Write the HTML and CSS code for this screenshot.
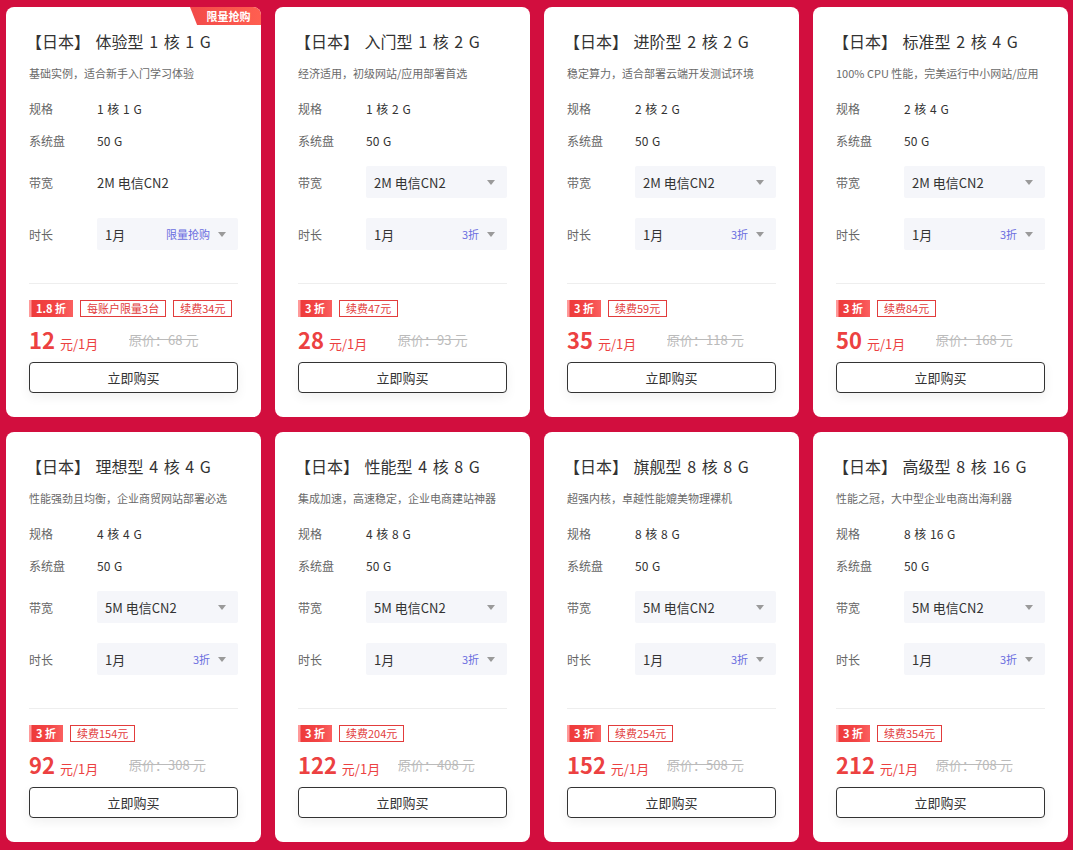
FILE: index.html
```html
<!DOCTYPE html>
<html lang="zh-CN">
<head>
  <meta charset="UTF-8">
  <meta name="viewport" content="width=device-width, initial-scale=1.0">
  <title>日本云服务器</title>
  <link rel="stylesheet" href="styles.css">
</head>
<body>
  <div class="grid">

    <div class="card">
      <div class="badge">限量抢购</div>
      <h3 class="title">【日本】 体验型 1 核 1 G</h3>
      <p class="desc">基础实例，适合新手入门学习体验</p>
      <div class="row"><span class="label">规格</span><span class="value">1 核 1 G</span></div>
      <div class="row"><span class="label">系统盘</span><span class="value">50 G</span></div>
      <div class="row row-bw"><span class="label">带宽</span><span class="value big">2M 电信CN2</span></div>
      <div class="row row-time"><span class="label">时长</span><div class="select"><span>1月</span><em>限量抢购</em><i class="arrow"></i></div></div>
      <div class="divider"></div>
      <div class="tags"><span class="tag-off">1.8 折</span><span class="tag">每账户限量3台</span><span class="tag">续费34元</span></div>
      <div class="price"><span class="now"><b>12</b> 元/1月</span><s class="old">原价：68 元</s></div>
      <button class="buy">立即购买</button>
    </div>

    <div class="card">
      <h3 class="title">【日本】 入门型 1 核 2 G</h3>
      <p class="desc">经济适用，初级网站/应用部署首选</p>
      <div class="row"><span class="label">规格</span><span class="value">1 核 2 G</span></div>
      <div class="row"><span class="label">系统盘</span><span class="value">50 G</span></div>
      <div class="row row-bw"><span class="label">带宽</span><div class="select"><span>2M 电信CN2</span><i class="arrow"></i></div></div>
      <div class="row row-time"><span class="label">时长</span><div class="select"><span>1月</span><em>3折</em><i class="arrow"></i></div></div>
      <div class="divider"></div>
      <div class="tags"><span class="tag-off">3 折</span><span class="tag">续费47元</span></div>
      <div class="price"><span class="now"><b>28</b> 元/1月</span><s class="old">原价：93 元</s></div>
      <button class="buy">立即购买</button>
    </div>

    <div class="card">
      <h3 class="title">【日本】 进阶型 2 核 2 G</h3>
      <p class="desc">稳定算力，适合部署云端开发测试环境</p>
      <div class="row"><span class="label">规格</span><span class="value">2 核 2 G</span></div>
      <div class="row"><span class="label">系统盘</span><span class="value">50 G</span></div>
      <div class="row row-bw"><span class="label">带宽</span><div class="select"><span>2M 电信CN2</span><i class="arrow"></i></div></div>
      <div class="row row-time"><span class="label">时长</span><div class="select"><span>1月</span><em>3折</em><i class="arrow"></i></div></div>
      <div class="divider"></div>
      <div class="tags"><span class="tag-off">3 折</span><span class="tag">续费59元</span></div>
      <div class="price"><span class="now"><b>35</b> 元/1月</span><s class="old">原价：118 元</s></div>
      <button class="buy">立即购买</button>
    </div>

    <div class="card">
      <h3 class="title">【日本】 标准型 2 核 4 G</h3>
      <p class="desc">100% CPU 性能，完美运行中小网站/应用</p>
      <div class="row"><span class="label">规格</span><span class="value">2 核 4 G</span></div>
      <div class="row"><span class="label">系统盘</span><span class="value">50 G</span></div>
      <div class="row row-bw"><span class="label">带宽</span><div class="select"><span>2M 电信CN2</span><i class="arrow"></i></div></div>
      <div class="row row-time"><span class="label">时长</span><div class="select"><span>1月</span><em>3折</em><i class="arrow"></i></div></div>
      <div class="divider"></div>
      <div class="tags"><span class="tag-off">3 折</span><span class="tag">续费84元</span></div>
      <div class="price"><span class="now"><b>50</b> 元/1月</span><s class="old">原价：168 元</s></div>
      <button class="buy">立即购买</button>
    </div>

    <div class="card">
      <h3 class="title">【日本】 理想型 4 核 4 G</h3>
      <p class="desc">性能强劲且均衡，企业商贸网站部署必选</p>
      <div class="row"><span class="label">规格</span><span class="value">4 核 4 G</span></div>
      <div class="row"><span class="label">系统盘</span><span class="value">50 G</span></div>
      <div class="row row-bw"><span class="label">带宽</span><div class="select"><span>5M 电信CN2</span><i class="arrow"></i></div></div>
      <div class="row row-time"><span class="label">时长</span><div class="select"><span>1月</span><em>3折</em><i class="arrow"></i></div></div>
      <div class="divider"></div>
      <div class="tags"><span class="tag-off">3 折</span><span class="tag">续费154元</span></div>
      <div class="price"><span class="now"><b>92</b> 元/1月</span><s class="old">原价：308 元</s></div>
      <button class="buy">立即购买</button>
    </div>

    <div class="card">
      <h3 class="title">【日本】 性能型 4 核 8 G</h3>
      <p class="desc">集成加速，高速稳定，企业电商建站神器</p>
      <div class="row"><span class="label">规格</span><span class="value">4 核 8 G</span></div>
      <div class="row"><span class="label">系统盘</span><span class="value">50 G</span></div>
      <div class="row row-bw"><span class="label">带宽</span><div class="select"><span>5M 电信CN2</span><i class="arrow"></i></div></div>
      <div class="row row-time"><span class="label">时长</span><div class="select"><span>1月</span><em>3折</em><i class="arrow"></i></div></div>
      <div class="divider"></div>
      <div class="tags"><span class="tag-off">3 折</span><span class="tag">续费204元</span></div>
      <div class="price"><span class="now"><b>122</b> 元/1月</span><s class="old">原价：408 元</s></div>
      <button class="buy">立即购买</button>
    </div>

    <div class="card">
      <h3 class="title">【日本】 旗舰型 8 核 8 G</h3>
      <p class="desc">超强内核，卓越性能媲美物理裸机</p>
      <div class="row"><span class="label">规格</span><span class="value">8 核 8 G</span></div>
      <div class="row"><span class="label">系统盘</span><span class="value">50 G</span></div>
      <div class="row row-bw"><span class="label">带宽</span><div class="select"><span>5M 电信CN2</span><i class="arrow"></i></div></div>
      <div class="row row-time"><span class="label">时长</span><div class="select"><span>1月</span><em>3折</em><i class="arrow"></i></div></div>
      <div class="divider"></div>
      <div class="tags"><span class="tag-off">3 折</span><span class="tag">续费254元</span></div>
      <div class="price"><span class="now"><b>152</b> 元/1月</span><s class="old">原价：508 元</s></div>
      <button class="buy">立即购买</button>
    </div>

    <div class="card">
      <h3 class="title">【日本】 高级型 8 核 16 G</h3>
      <p class="desc">性能之冠，大中型企业电商出海利器</p>
      <div class="row"><span class="label">规格</span><span class="value">8 核 16 G</span></div>
      <div class="row"><span class="label">系统盘</span><span class="value">50 G</span></div>
      <div class="row row-bw"><span class="label">带宽</span><div class="select"><span>5M 电信CN2</span><i class="arrow"></i></div></div>
      <div class="row row-time"><span class="label">时长</span><div class="select"><span>1月</span><em>3折</em><i class="arrow"></i></div></div>
      <div class="divider"></div>
      <div class="tags"><span class="tag-off">3 折</span><span class="tag">续费354元</span></div>
      <div class="price"><span class="now"><b>212</b> 元/1月</span><s class="old">原价：708 元</s></div>
      <button class="buy">立即购买</button>
    </div>

  </div>
</body>
</html>
```

FILE: styles.css
```css
body {
  margin: 0;
  background-color: #d20e3e;
  font-family: "Noto Sans CJK SC", "Noto Sans", sans-serif;
  color: #333;
}
.grid {
  display: grid;
  grid-template-columns: repeat(4, 255px);
  column-gap: 14px;
  row-gap: 15px;
  padding: 7px 0 0 6px;
}
.card {
  position: relative;
  background-color: #ffffff;
  border-radius: 8px;
  padding: 23px;
  height: 410px;
  box-sizing: border-box;
}
.badge {
  position: absolute;
  top: 0;
  right: 0;
  width: 71px;
  height: 18px;
  line-height: 18px;
  padding-left: 6px;
  box-sizing: border-box;
  text-align: center;
  font-size: 11px;
  font-weight: bold;
  color: #fff;
  background: linear-gradient(90deg, #f24a4a, #ff5f50);
  border-top-right-radius: 8px;
  clip-path: polygon(0 0, 100% 0, 100% 100%, 10% 100%);
}
.title {
  margin: 0 0 0 -3px;
  font-size: 16px;
  line-height: 22px;
  padding-bottom: 2px;
  font-weight: normal;
  word-spacing: 2px;
  color: #333;
}
.desc {
  margin: 10px 0 10px;
  font-size: 11px;
  line-height: 18px;
  color: #6a6a6a;
}
.row {
  display: flex;
  align-items: center;
  height: 32px;
  font-size: 12px;
}
.row-bw {
  margin-top: 10px;
}
.row-time {
  margin-top: 20px;
}
.label {
  width: 68px;
  flex-shrink: 0;
  color: #666;
}
.value {
  color: #333;
  word-spacing: 1px;
}
.value.big {
  font-size: 13px;
  word-spacing: 0;
}
.select {
  flex: 1;
  display: flex;
  align-items: center;
  height: 32px;
  padding: 0 12px 0 8px;
  background-color: #f5f6fa;
  border-radius: 2px;
  font-size: 13px;
  color: #333;
}
.select span {
  flex: 1;
}
.select em {
  font-style: normal;
  font-size: 11px;
  color: #6b6ee0;
  margin-right: 8px;
}
.arrow {
  width: 0;
  height: 0;
  border-left: 4px solid transparent;
  border-right: 4px solid transparent;
  border-top: 5px solid #9a9a9a;
}
.divider {
  margin-top: 33px;
  height: 1px;
  background-color: #eeeeee;
}
.tags {
  display: flex;
  gap: 7px;
  margin-top: 16px;
  height: 17px;
}
.tag-off,
.tag {
  height: 17px;
  line-height: 15px;
  font-size: 11px;
  padding: 0 6px;
  box-sizing: border-box;
}
.tag-off {
  line-height: 17px;
  color: #fff;
  font-weight: bold;
  padding: 0 7px;
  background: linear-gradient(90deg, #ff9a9a 0, #ff9a9a 2px, #ee3b3b 3px, #f24545 60%, #fb6060);
}
.tag {
  color: #e23c3c;
  border: 1px solid #e23c3c;
}
.price {
  display: flex;
  align-items: center;
  height: 28px;
  margin-top: 8px;
  margin-bottom: 1px;
}
.now {
  width: 100px;
  color: #ec4141;
  font-size: 13px;
}
.now b {
  font-size: 22px;
  font-weight: bold;
  margin-right: 2px;
}
.old {
  font-size: 13px;
  color: #bbbbbb;
}
.buy {
  display: block;
  width: 100%;
  height: 31px;
  margin-top: 9px;
  background: #fff;
  border: 1px solid #333;
  border-radius: 4px;
  font-family: inherit;
  font-size: 13px;
  color: #333;
  box-shadow: 0 4px 12px rgba(0, 0, 0, 0.06);
  cursor: pointer;
}
```
